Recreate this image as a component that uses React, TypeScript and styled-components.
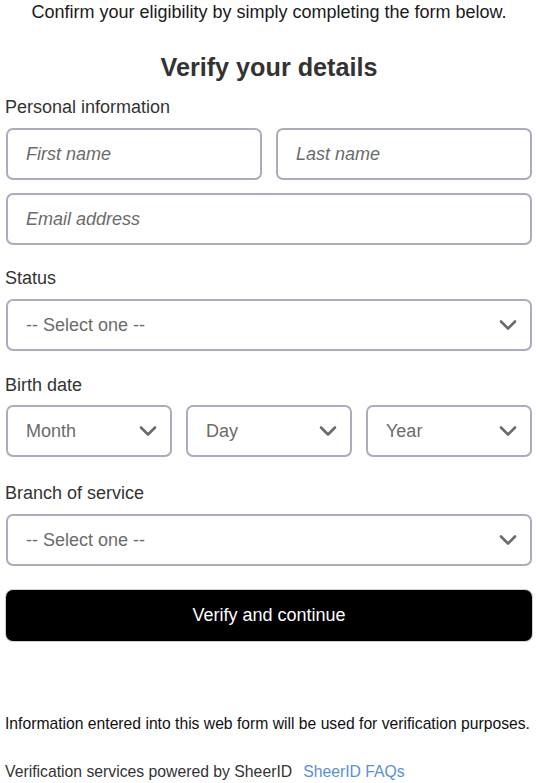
import React from "react";
import styled, { createGlobalStyle } from "styled-components";

const Global = createGlobalStyle`
  html, body { margin: 0; padding: 0; background: #fff; }
  body { font-family: Arial, "Liberation Sans", Helvetica, sans-serif; color: #333; }
  * { box-sizing: border-box; }
`;

const Page = styled.div`
  display: flex;
  flex-direction: column;
  padding: 0 6px 0 6px;
  width: 538px;
`;

const Intro = styled.p`
  margin: 0;
  font-size: 18px;
  line-height: 24px;
  color: #1a1a1a;
  text-align: center;
`;

const Heading = styled.h1`
  margin: 28px 0 0;
  font-size: 25.2px;
  line-height: 30px;
  font-weight: 700;
  color: #333;
  text-align: center;
`;

const Label = styled.div<{ $top: number; $bottom?: number }>`
  margin: ${(p) => p.$top}px 0 ${(p) => p.$bottom ?? 11}px -1px;
  font-size: 18px;
  line-height: 20px;
  color: #333;
`;

const Row = styled.div<{ $cols: number; $gap: number }>`
  display: grid;
  grid-template-columns: repeat(${(p) => p.$cols}, 1fr);
  column-gap: ${(p) => p.$gap}px;
`;

const Field = styled.div<{ $mt?: number }>`
  height: 52px;
  margin-top: ${(p) => p.$mt ?? 0}px;
  border: 2.5px solid #aaadbf;
  border-radius: 7px;
  display: flex;
  align-items: center;
  justify-content: space-between;
  padding: 0 13px 0 18px;
  font-size: 18px;
  color: #6b6b6b;
  background: #fff;
`;

const Placeholder = styled.span<{ $italic?: boolean }>`
  font-style: ${(p) => (p.$italic ? "italic" : "normal")};
  color: #6b6b6b;
`;

const Chevron = () => (
  <svg width="18" height="12" viewBox="0 0 18 12" fill="none">
    <path d="M2 2.5 L9 9.5 L16 2.5" stroke="#6b6b6b" strokeWidth="2.6" strokeLinecap="round" strokeLinejoin="round" />
  </svg>
);

const Button = styled.button`
  margin-top: 24px;
  height: 51px;
  width: 100%;
  border: none;
  border-radius: 7px;
  background: #000;
  color: #fff;
  font-family: Arial, "Liberation Sans", sans-serif;
  font-size: 18px;
  box-shadow: 0 0 0 1px #d0d0d0;
`;

const Info = styled.p`
  margin: 74px 0 0 -1px;
  font-size: 15.7px;
  line-height: 18px;
  color: #111;
  white-space: nowrap;
`;

const Footer = styled.div`
  margin: 30px 0 0 -1px;
  font-size: 15.75px;
  line-height: 18px;
  color: #333;
  display: flex;
  gap: 11px;
  white-space: nowrap;
`;

const Link = styled.a`
  color: #5a8fd2;
  text-decoration: none;
`;

const Select = ({ text }: { text: string }) => (
  <Field>
    <Placeholder>{text}</Placeholder>
    <Chevron />
  </Field>
);

export default function App() {
  return (
    <>
      <Global />
      <Page>
        <Intro>Confirm your eligibility by simply completing the form below.</Intro>
        <Heading>Verify your details</Heading>
        <Label $top={15}>Personal information</Label>
        <Row $cols={2} $gap={14}>
          <Field><Placeholder $italic>First name</Placeholder></Field>
          <Field><Placeholder $italic>Last name</Placeholder></Field>
        </Row>
        <Field $mt={13}><Placeholder $italic>Email address</Placeholder></Field>
        <Label $top={23}>Status</Label>
        <Select text="-- Select one --" />
        <Label $top={24} $bottom={10}>Birth date</Label>
        <Row $cols={3} $gap={14}>
          <Select text="Month" />
          <Select text="Day" />
          <Select text="Year" />
        </Row>
        <Label $top={26}>Branch of service</Label>
        <Select text="-- Select one --" />
        <Button>Verify and continue</Button>
        <Info>Information entered into this web form will be used for verification purposes.</Info>
        <Footer>
          <span>Verification services powered by SheerID</span>
          <Link href="#">SheerID FAQs</Link>
        </Footer>
      </Page>
    </>
  );
}
